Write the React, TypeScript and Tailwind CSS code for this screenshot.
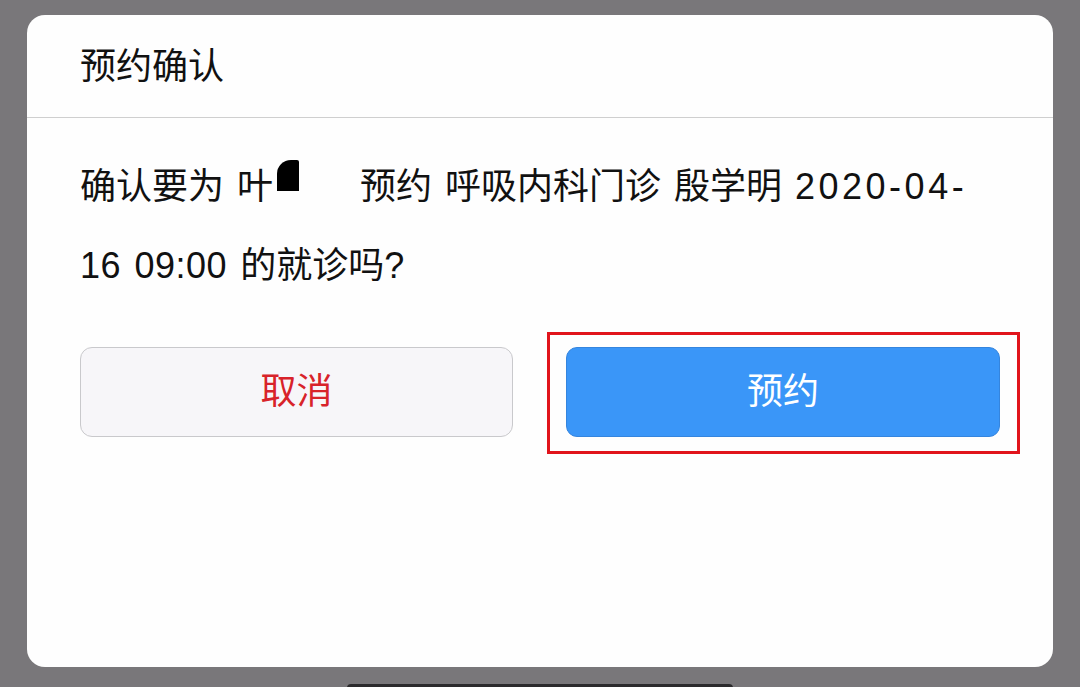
const font = { fontFamily: '"Liberation Sans", "Noto Sans CJK SC", sans-serif' };

const App = () => {
  return (
    <div className="h-[687px] w-[1080px] overflow-hidden bg-[#79777a] px-[27px] pt-[15px]" style={font}>
      {/* Dialog */}
      <div className="h-[652px] rounded-[18px] bg-[#fefefe]">
        <div className="flex h-[103px] items-center border-b border-[#cfcfcf] pl-[53px] pt-[2px] text-[36px] text-[#111]">
          预约确认
        </div>

        <div className="px-[53px] pt-[29px]">
          <p className="text-[36px] leading-[79px] text-[#111] [word-spacing:3px]">
            确认要为 叶
            <span className="inline-flex w-[87px] align-top">
              <span className="mt-[13px] ml-[4px] inline-block h-[31px] w-[22px] rounded-tl-[14px] rounded-tr-[2px] bg-black" />
            </span>
            预约 呼吸内科门诊 殷学明 <span className="tracking-[3.5px]">2020-04-</span>
            <br />
            <span className="tracking-[0.5px]">16 09:00</span> 的就诊吗?
          </p>

          <div className="mt-[42px] flex gap-[53px]">
            <button className="h-[90px] w-[433px] rounded-[12px] border border-[#c9c9cc] bg-[#f7f6f9] text-[36px] text-[#d8232a]">
              取消
            </button>
            <div className="relative">
              <button className="h-[90px] w-[434px] rounded-[11px] border border-[#3585de] bg-[#3a96f8] text-[36px] text-white">
                预约
              </button>
              {/* red highlight frame */}
              <span className="pointer-events-none absolute -top-[15px] -right-[20px] -bottom-[17px] -left-[19px] border-[3px] border-[#e1141c]" />
            </div>
          </div>
        </div>
      </div>

      {/* home indicator */}
      <div className="mx-auto mt-[17px] h-[8px] w-[386px] rounded-full bg-[#2b2a2c]" />
    </div>
  );
};

export default App;
